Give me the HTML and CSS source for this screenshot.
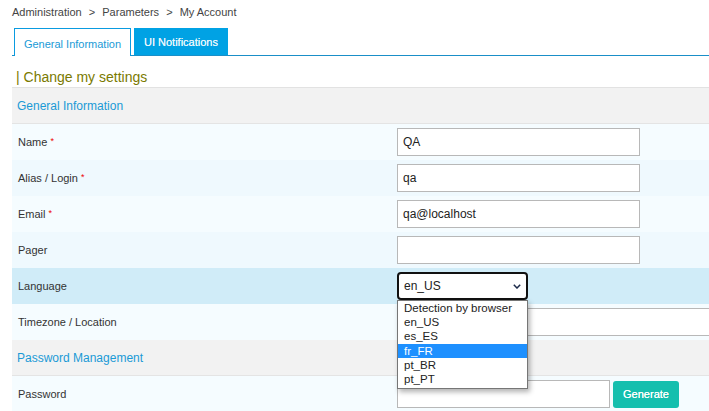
FILE: index.html
```html
<!DOCTYPE html>
<html>
<head>
<meta charset="utf-8">
<link rel="stylesheet" href="styles.css">
</head>
<body>
<div class="page">
  <div class="crumbs">Administration <span class="sep">&gt;</span> Parameters <span class="sep">&gt;</span> My Account</div>
  <div class="tabs">
    <div class="tab active">General Information</div>
    <div class="tab other">UI Notifications</div>
  </div>
  <div class="title">| Change my settings</div>
  <div class="form">
    <div class="section">General Information</div>
    <div class="row r1"><div class="label">Name <span class="req">*</span></div><div class="field"><div class="input">QA</div></div></div>
    <div class="row r2"><div class="label">Alias / Login <span class="req">*</span></div><div class="field"><div class="input">qa</div></div></div>
    <div class="row r1"><div class="label">Email <span class="req">*</span></div><div class="field"><div class="input">qa@localhost</div></div></div>
    <div class="row r2"><div class="label">Pager</div><div class="field"><div class="input"></div></div></div>
    <div class="row hl"><div class="label">Language</div>
      <div class="field">
        <div class="select">en_US
          <svg class="chev" width="8" height="5" viewBox="0 0 8 5"><path d="M0.8 0.8 L4 4 L7.2 0.8" fill="none" stroke="#1c2a4a" stroke-width="1.5"/></svg>
        </div>
        <div class="dropdown">
          <div class="opt">Detection by browser</div>
          <div class="opt">en_US</div>
          <div class="opt">es_ES</div>
          <div class="opt sel">fr_FR</div>
          <div class="opt">pt_BR</div>
          <div class="opt">pt_PT</div>
        </div>
      </div>
    </div>
    <div class="row r1"><div class="label">Timezone / Location</div><div class="field"><div class="input wide"></div></div></div>
    <div class="section">Password Management</div>
    <div class="row r1"><div class="label">Password</div><div class="field pw"><div class="input short"></div><div class="btn">Generate</div></div></div>
  </div>
</div>
</body>
</html>
```
FILE: styles.css
```css
* { box-sizing: border-box; }
body { margin: 0; font-family: "Liberation Sans", Arial, sans-serif; background: #fff; overflow: hidden; }
.page { padding-left: 12px; width: 709px; }
.crumbs { font-size: 11px; color: #444; height: 28px; padding-top: 6px; }
.crumbs .sep { margin: 0 4px; }
.tabs { display: flex; gap: 3px; border-bottom: 1px solid #1a8fc8; height: 28px; align-items: flex-end; }
.tab { font-size: 11px; display: flex; align-items: center; justify-content: center; }
.tab.active { width: 117px; height: 28px; border: 1px solid #0a9be0; border-bottom: none; color: #1a9ad6; margin-left: 2px; background: #fff; margin-bottom: -1px; padding-top: 2px; }
.tab.other { width: 94px; height: 27px; background: #00a2e4; color: #e8f6fc; text-shadow: 0 0 0.4px #e8f6fc; }
.title { color: #7a7a00; font-size: 14px; height: 31px; padding: 13px 0 0 4px; }
.form { width: 697px; border-top: 1px solid #e2e2e2; }
.section { height: 36px; background: #f2f2f2; color: #1a9ad6; font-size: 12px; display: flex; align-items: center; padding-left: 5px; border-bottom: 1px solid #e4e4e4; }
.row { height: 36px; display: grid; grid-template-columns: 385px 1fr; align-items: center; }
.r1 { background: #f5fcff; }
.r2 { background: #eff9fe; }
.hl { background: #d0ecf8; }
.label { font-size: 11px; color: #333; padding-left: 6px; }
.req { color: #e00; font-size: 9px; vertical-align: 2px; }
.field { position: relative; display: flex; align-items: center; gap: 3px; }
.input { width: 243px; height: 28px; border: 1px solid #b8b8b8; background: #fff; font-size: 12px; color: #222; padding-left: 5px; display: flex; align-items: center; }
.input.wide { width: 320px; }
.input.short { width: 213px; }
.btn { background: #15bfae; color: #fff; font-size: 11px; text-shadow: 0 0 0.5px #fff; width: 66px; height: 27px; border-radius: 3px; display: flex; align-items: center; justify-content: center; }
.select { width: 131px; height: 28px; border: 2px solid #111; border-radius: 4px; background: #fff; font-size: 12px; color: #222; padding-left: 5px; display: flex; align-items: center; position: relative; }
.chev { position: absolute; right: 5px; top: 10px; }
.dropdown { position: absolute; left: 0; top: 28px; width: 131px; background: #fff; border: 1px solid #767676; box-shadow: 2px 3px 5px rgba(0,0,0,0.3); padding: 0 0 2px; z-index: 5; }
.opt { font-size: 11.5px; height: 14.2px; line-height: 14px; padding-left: 6px; color: #222; }
.opt.sel { background: #1e90ff; color: #fff; }
```
